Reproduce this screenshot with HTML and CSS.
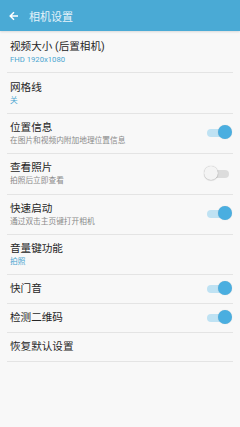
FILE: index.html
```html
<!DOCTYPE html>
<html lang="zh">
<head>
<meta charset="utf-8">
<link rel="stylesheet" href="styles.css">
</head>
<body>
<header class="appbar">
  <svg class="back" width="10" height="10" viewBox="0 0 10 10"><path d="M9 5H1.5M5 1.2L1.2 5L5 8.8" fill="none" stroke="#fff" stroke-width="1.5"/></svg>
  <span class="appbar-title">相机设置</span>
</header>
<main class="list">
  <div class="row"><div class="text"><div class="title">视频大小 (后置相机)</div><div class="sub value">FHD 1920x1080</div></div></div>
  <div class="row"><div class="text"><div class="title">网格线</div><div class="sub value">关</div></div></div>
  <div class="row"><div class="text"><div class="title">位置信息</div><div class="sub">在图片和视频内附加地理位置信息</div></div><span class="switch on"></span></div>
  <div class="row"><div class="text"><div class="title">查看照片</div><div class="sub">拍照后立即查看</div></div><span class="switch"></span></div>
  <div class="row"><div class="text"><div class="title">快速启动</div><div class="sub">通过双击主页键打开相机</div></div><span class="switch on"></span></div>
  <div class="row"><div class="text"><div class="title">音量键功能</div><div class="sub value">拍照</div></div></div>
  <div class="row single"><div class="text"><div class="title">快门音</div></div><span class="switch on"></span></div>
  <div class="row single"><div class="text"><div class="title">检测二维码</div></div><span class="switch on"></span></div>
  <div class="row single"><div class="text"><div class="title">恢复默认设置</div></div></div>
</main>
</body>
</html>
```
FILE: styles.css
```css
* { box-sizing: border-box; }
html, body { margin: 0; padding: 0; }
body {
  width: 240px;
  height: 427px;
  background: #f8f8f8;
  font-family: Roboto, "Noto Sans CJK SC", sans-serif;
  overflow: hidden;
}
.appbar {
  height: 31px;
  background: #4aaad5;
  display: flex;
  align-items: center;
  padding-left: 9px;
  box-shadow: 0 1px 2px rgba(0,0,0,0.12);
}
.back { margin-right: 10px; }
.appbar-title {
  color: #e6f3fa;
  font-size: 11px;
}
.list {
  display: flex;
  flex-direction: column;
  padding-top: 2px;
}
.row {
  display: flex;
  align-items: center;
  margin: 0 7px;
  padding: 7px 3px;
  min-height: 40.4px;
  border-bottom: 1px solid #e4e4e4;
}
.row.single { min-height: 29px; }
.text { flex: 1; }
.title {
  font-size: 10.6px;
  line-height: 14px;
  color: #262626;
}
.sub {
  font-size: 7.7px;
  line-height: 11px;
  color: #8a8a8a;
}
.sub.value { color: #4aa5d0; }
.switch {
  position: relative;
  width: 22px;
  height: 8px;
  border-radius: 4px;
  background: #dcdcdc;
  margin-right: 1px;
}
.switch::after {
  content: "";
  position: absolute;
  top: -4px;
  left: -3px;
  width: 14px;
  height: 14px;
  border-radius: 50%;
  background: #f4f4f4;
  box-shadow: 0 0 1px rgba(0,0,0,0.35), 0 1px 1px rgba(0,0,0,0.1);
}
.switch.on { background: #bfe2f3; }
.switch.on::after {
  left: auto;
  right: -3px;
  background: #4aaee0;
  box-shadow: 0 0 1px rgba(0,0,0,0.2);
}
```
